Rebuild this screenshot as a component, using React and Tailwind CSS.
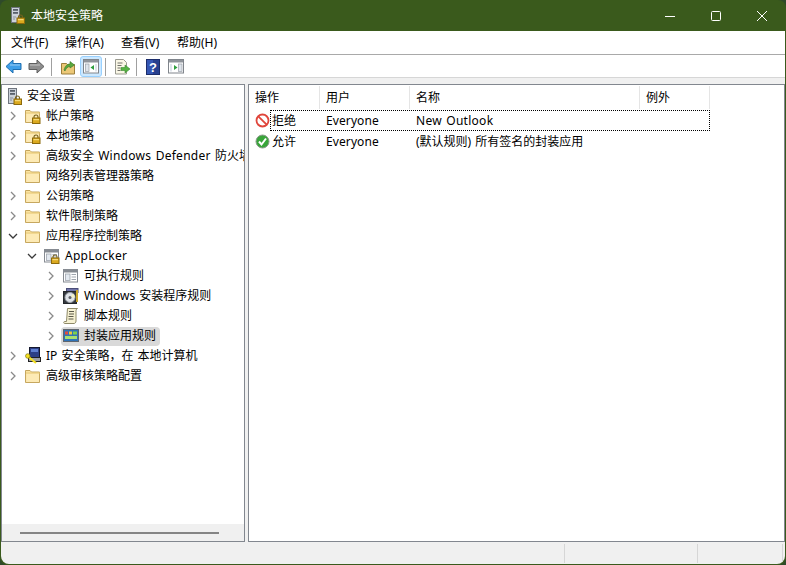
const FONT = "font-['Noto_Sans','Noto_Sans_CJK_SC',sans-serif]";

function Lock({ x = 8, y = 8 }) {
  return (
    <g transform={`translate(${x} ${y})`}>
      <path d="M2 4V2.500a2 2 0 0 1 4 0V4" fill="none" stroke="#77621f" strokeWidth="1.100" />
      <rect x="0.500" y="3.500" width="7.500" height="5.500" fill="#dba91e" stroke="#8c6a0c" />
      <rect x="1.500" y="4.500" width="5.500" height="1.200" fill="#f6d978" />
    </g>
  );
}

function Folder({ lock }) {
  return (
    <svg width="16" height="16" viewBox="0 0 16 16" className="shrink-0">
      <path d="M0.500 2.500h4.500l1.500 1.500h8v10.500H0.500z" fill="#fbe3a0" stroke="#c6a75f" />
      <rect x="1.500" y="5.500" width="12.500" height="8.500" fill="#fdeab5" />
      <path d="M1 5h14" stroke="#e6c878" />
      {lock && <Lock x={7} y={6.500} />}
    </svg>
  );
}

function Server() {
  return (
    <svg width="14" height="17" viewBox="0 0 14 17" className="shrink-0">
      <rect x="0.500" y="0.500" width="8" height="15" fill="#ccd2da" stroke="#6f757e" />
      <rect x="2" y="2" width="5" height="1.800" fill="#59606a" />
      <rect x="2" y="5" width="5" height="1.800" fill="#59606a" />
      <path d="M2 10h3M2 12h2" stroke="#8a9099" />
      <Lock x={5.500} y={7.500} />
    </svg>
  );
}

function WinIcon({ lock }) {
  return (
    <svg width="16" height="16" viewBox="0 0 16 16" className="shrink-0">
      <rect x="0.500" y="1.500" width="14" height="12.500" fill="#fff" stroke="#868b92" />
      <rect x="1" y="2" width="13" height="2.500" fill="#868b92" />
      <rect x="2.500" y="6" width="4.500" height="6.500" fill="#e3e9f0" stroke="#9fa5ad" strokeWidth="0.800" />
      <path d="M8.500 6.500h4.500M8.500 9h4.500M8.500 11.500h4.500" stroke="#9fa5ad" />
      {lock && <Lock x={7} y={6.500} />}
    </svg>
  );
}

function Disc() {
  return (
    <svg width="16" height="16" viewBox="0 0 16 16" className="shrink-0">
      <rect x="3.500" y="0.500" width="11.500" height="4" fill="#6f73a8" stroke="#4a4d78" />
      <rect x="0.500" y="3.500" width="13" height="12" fill="#34383e" stroke="#24272b" />
      <rect x="13" y="2" width="2" height="12" fill="#c9a62a" />
      <circle cx="7" cy="9.500" r="5" fill="#dfe3e8" stroke="#9ba0a8" />
      <path d="M7 9.500L10 5.500A5 5 0 0 1 12 9.500z" fill="#f3f1c8" />
      <circle cx="7" cy="9.500" r="1.500" fill="#5d6168" />
    </svg>
  );
}

function Script() {
  return (
    <svg width="16" height="16" viewBox="0 0 16 16" className="shrink-0">
      <path d="M4.500 0.500h10c-1.200.6-1.500 1.500-1.500 3V13c0 1.500-1 2.500-2 2.500H1.500c-1 0-1-2 0-2H3.500z" fill="#f6f1d2" stroke="#8f8a68" />
      <path d="M6 3.500h5M6 6h5M5.500 8.500h5M5.500 11h5" stroke="#5a5848" />
    </svg>
  );
}

function Pkg() {
  return (
    <svg width="16" height="14" viewBox="0 0 16 14" className="shrink-0">
      <rect x="0.500" y="0.500" width="15" height="12" fill="#2f73b8" stroke="#5f666e" />
      <rect x="2" y="2.500" width="3" height="3" fill="#e14b3f" />
      <rect x="6" y="2.500" width="3" height="3" fill="#f2c93a" />
      <rect x="10" y="2.500" width="4" height="3" fill="#7ed04c" />
      <rect x="2" y="7" width="12" height="3" fill="#a8e070" />
    </svg>
  );
}

function IpIcon() {
  return (
    <svg width="16" height="18" viewBox="0 0 16 18" className="shrink-0">
      <rect x="4.500" y="0.500" width="10" height="10" fill="#2c3f86" stroke="#14182e" />
      <rect x="6" y="2" width="7" height="3" fill="#5f7fd0" />
      <rect x="3.500" y="10.500" width="12" height="4" fill="#9ca1a8" stroke="#222" />
      <path d="M3 9.500l8 6.500" stroke="#f4e023" strokeWidth="2.200" />
      <circle cx="2.800" cy="9" r="2.300" fill="#f4e023" stroke="#6e640e" strokeWidth="0.600" />
    </svg>
  );
}

function Chevron({ open }) {
  return (
    <svg width="10" height="10" viewBox="0 0 10 10" className="shrink-0">
      {open ? (
        <path d="M1 3l4 4 4-4" fill="none" stroke="#3a3a3a" strokeWidth="1.300" />
      ) : (
        <path d="M3 1l4 4-4 4" fill="none" stroke="#8a8a8a" strokeWidth="1.300" />
      )}
    </svg>
  );
}

function L({ children }) {
  return <span className="tracking-[0.27px]">{children}</span>;
}

function TreeRow({ pad, chevron, icon, label, selected }) {
  return (
    <div className={`flex h-5 items-center whitespace-nowrap ${pad}`}>
      <span className="flex w-[12px] shrink-0 justify-center">{chevron && <Chevron open={chevron === "open"} />}</span>
      <span className={`ml-[4px] flex h-[19px] items-center rounded-sm pl-[2px] pr-[4px] ${selected ? "bg-[#d9d9d9]" : ""}`}>
        <span className="mr-[5px] flex w-[16px] shrink-0 justify-center">{icon}</span>
        <span>{label}</span>
      </span>
    </div>
  );
}

function Arrow({ left, color, dark }) {
  return (
    <svg width="17" height="15" viewBox="0 0 17 15" className="shrink-0">
      <path d={left ? "M1 7.500L8 1v3.500h8v6H8V14z" : "M16 7.500L9 1v3.500H1v6h8V14z"} fill={color} stroke={dark} />
      <path d={left ? "M5 6h10" : "M2 6h10"} stroke="#fff" strokeOpacity="0.500" />
    </svg>
  );
}

function Sep({ className }) {
  return <span className={`h-[18px] w-px shrink-0 bg-[#a0a0a0] ${className}`} />;
}

function PanelIcon({ side }) {
  return (
    <svg width="16" height="15" viewBox="0 0 16 15" className="shrink-0">
      <rect x="0.500" y="0.500" width="15" height="13.500" fill="#fff" stroke="#80858c" />
      <rect x="1" y="1" width="14" height="2.500" fill="#8f949b" />
      {side === "left" ? (
        <>
          <rect x="2.500" y="5" width="3.500" height="7.500" fill="#dfe5ec" stroke="#9aa0a8" strokeWidth="0.700" />
          <path d="M11 6v5L7.500 8.500z" fill="#2e9e3e" />
          <rect x="12" y="5" width="2" height="7.500" fill="#dfe5ec" />
        </>
      ) : (
        <>
          <rect x="2" y="5" width="2" height="7.500" fill="#dfe5ec" />
          <path d="M6 6v5l3.500-2.500z" fill="#2e9e3e" />
          <rect x="10.500" y="5" width="3.500" height="7.500" fill="#dfe5ec" stroke="#9aa0a8" strokeWidth="0.700" />
        </>
      )}
    </svg>
  );
}

function UpFolder() {
  return (
    <svg width="16" height="16" viewBox="0 0 16 16" className="shrink-0">
      <path d="M1.500 4.500h5l1 1h7v9.500h-13z" fill="#ecc877" stroke="#9c7f3c" />
      <path d="M4 11c1-4 3-6 6-6V2.500L14.500 6 10 9V7.500C8 7.500 6 9 5 12z" fill="#58a83c" stroke="#39752a" strokeWidth="0.600" />
    </svg>
  );
}

function ExportIcon() {
  return (
    <svg width="17" height="16" viewBox="0 0 17 16" className="shrink-0">
      <path d="M1.500 0.500h8l3 3v11.500h-11z" fill="#faf7e6" stroke="#9a9a90" />
      <path d="M3.500 4h5M3.500 6.500h4M3.500 9h3M3.500 11.500h3" stroke="#70706a" />
      <path d="M7 8.500h4V6l5 4-5 4v-2.500H7z" fill="#56b344" stroke="#3a8a30" strokeWidth="0.600" />
    </svg>
  );
}

function HelpIcon() {
  return (
    <svg width="14" height="16" viewBox="0 0 14 16" className="shrink-0">
      <rect x="0.500" y="0.500" width="13" height="15" fill="#27408f" stroke="#1c2d6b" />
      <rect x="1" y="1" width="6" height="14" fill="#3556b3" />
      <text x="7" y="12.500" textAnchor="middle" fontSize="13" fontWeight="700" fill="#fff" fontFamily="Liberation Sans, sans-serif">?</text>
    </svg>
  );
}

function Deny() {
  return (
    <svg width="15" height="15" viewBox="0 0 15 15" className="shrink-0">
      <circle cx="7.500" cy="7.500" r="6" fill="#fff" stroke="#e0463c" strokeWidth="1.800" />
      <path d="M3.300 3.300l8.400 8.400" stroke="#e0463c" strokeWidth="1.800" />
    </svg>
  );
}

function Allow() {
  return (
    <svg width="15" height="15" viewBox="0 0 15 15" className="shrink-0">
      <circle cx="7.500" cy="7.500" r="6.500" fill="#39a53a" stroke="#8a9a8a" />
      <path d="M4 7.500l2.500 3L11 4.500" fill="none" stroke="#fff" strokeWidth="2" />
    </svg>
  );
}

const tree = [
  { pad: "pl-[5px]", chevron: "right", icon: <Folder lock />, label: "帐户策略" },
  { pad: "pl-[5px]", chevron: "right", icon: <Folder lock />, label: "本地策略" },
  { pad: "pl-[5px]", chevron: "right", icon: <Folder />, label: <>高级安全 <L>Windows Defender</L> 防火墙</> },
  { pad: "pl-[5px]", icon: <Folder />, label: "网络列表管理器策略" },
  { pad: "pl-[5px]", chevron: "right", icon: <Folder />, label: "公钥策略" },
  { pad: "pl-[5px]", chevron: "right", icon: <Folder />, label: "软件限制策略" },
  { pad: "pl-[5px]", chevron: "open", icon: <Folder />, label: "应用程序控制策略" },
  { pad: "pl-[24px]", chevron: "open", icon: <WinIcon lock />, label: <L>AppLocker</L> },
  { pad: "pl-[43px]", chevron: "right", icon: <WinIcon />, label: "可执行规则" },
  { pad: "pl-[43px]", chevron: "right", icon: <Disc />, label: "Windows 安装程序规则" },
  { pad: "pl-[43px]", chevron: "right", icon: <Script />, label: "脚本规则" },
  { pad: "pl-[43px]", chevron: "right", icon: <Pkg />, label: "封装应用规则", selected: true },
  { pad: "pl-[5px]", chevron: "right", icon: <IpIcon />, label: "IP 安全策略，在 本地计算机" },
  { pad: "pl-[5px]", chevron: "right", icon: <Folder />, label: "高级审核策略配置" },
];

const rows = [
  { icon: <Deny />, action: "拒绝", user: "Everyone", name: <L>New Outlook</L>, focus: true },
  { icon: <Allow />, action: "允许", user: "Everyone", name: "(默认规则) 所有签名的封装应用" },
];

export default function App() {
  return (
    <div className={`${FONT} h-[565px] w-[786px] overflow-hidden bg-[#2f4a2a] text-[12px] text-black`}>
      <div className="flex h-full flex-col overflow-hidden rounded-lg bg-[#3a5a1c] px-px pb-px">
        <header className="flex h-[31px] shrink-0 items-center text-white">
          <span className="ml-[10px] flex"><Server /></span>
          <span className="ml-[6px]">本地安全策略</span>
          <div className="ml-auto flex h-full">
            {[
              <path key="a" d="M0 5.500h10" stroke="#fff" />,
              <rect key="b" x="0.500" y="0.500" width="9" height="9" rx="1" fill="none" stroke="#fff" />,
              <path key="c" d="M0 0l10 10M10 0L0 10" stroke="#fff" />,
            ].map((g, i) => (
              <span key={i} className="flex h-full w-[46px] items-center justify-center">
                <svg width="10" height="10" viewBox="0 0 10 10">{g}</svg>
              </span>
            ))}
          </div>
        </header>

        <div className="flex min-h-0 flex-1 flex-col overflow-hidden rounded-b-lg bg-[#f0f0f0]">
          <nav className="flex h-[24px] shrink-0 items-center border-b border-[#a9a9a9] bg-white pl-[10px] pt-px">
            <span className="w-[54px]">文件(F)</span>
            <span className="w-[56px]">操作(A)</span>
            <span className="w-[56px]">查看(V)</span>
            <span>帮助(H)</span>
          </nav>

          <div className="flex h-[23px] shrink-0 items-center border-b border-[#d6d6d6] bg-white pl-[4px] pt-px">
            <Arrow left color="#3f9fe8" dark="#1f6fb0" />
            <span className="ml-[6px] flex"><Arrow color="#8d8d8d" dark="#5e5e5e" /></span>
            <Sep className="ml-[6px]" />
            <span className="ml-[8px] flex"><UpFolder /></span>
            <span className="ml-[4px] flex h-[21px] w-[22px] items-center justify-center rounded-[3px] border border-[#99d1ff] bg-[#cce8ff]"><PanelIcon side="left" /></span>
            <Sep className="ml-[3px]" />
            <span className="ml-[8px] flex"><ExportIcon /></span>
            <Sep className="ml-[5px]" />
            <span className="ml-[9px] flex"><HelpIcon /></span>
            <span className="ml-[8px] flex"><PanelIcon side="right" /></span>
          </div>

          <main className="mt-[6px] flex min-h-0 flex-1 gap-[3px]">
            <section className="flex w-[244px] shrink-0 flex-col border border-[#82878f] bg-white">
              <div className="flex-1 overflow-hidden pt-[1px] [word-spacing:1px]">
                <div className="flex h-5 items-center pl-[6px]">
                  <Server />
                  <span className="ml-[5px]">安全设置</span>
                </div>
                {tree.map((r, i) => (
                  <TreeRow key={i} {...r} />
                ))}
              </div>
              <div className="flex h-[17px] shrink-0 items-center bg-[#f0f0f0] pl-[18px]">
                <span className="h-[2px] w-[199px] bg-[#858585]" />
              </div>
            </section>

            <section className="min-w-0 flex-1 border border-[#82878f] bg-white">
              <div className="flex h-[24px] items-stretch pt-px">
                {[
                  ["操作", "w-[71px] pl-[6px]"],
                  ["用户", "w-[90px] pl-[6px]"],
                  ["名称", "w-[230px] pl-[6px]"],
                  ["例外", "w-[70px] pl-[6px]"],
                ].map(([t, c]) => (
                  <div key={t} className={`flex items-center border-r border-[#e5e5e5] pt-px ${c}`}>{t}</div>
                ))}
              </div>
              <div className="mt-px [word-spacing:1px]">
                {rows.map((r) => (
                  <div key={r.action} className="flex h-[21px] w-[461px] items-center">
                    <span className="ml-[6px] flex w-[15px] shrink-0">{r.icon}</span>
                    <div className={`flex h-full w-[440px] items-center ${r.focus ? "border border-dotted border-black" : "border border-transparent"}`}>
                      <span className="ml-[1px] w-[54px] shrink-0">{r.action}</span>
                      <span className="w-[90px] shrink-0 tracking-[0.1px]">{r.user}</span>
                      <span className="whitespace-nowrap">{r.name}</span>
                    </div>
                  </div>
                ))}
              </div>
            </section>
          </main>

          <footer className="flex h-[22px] shrink-0 items-center justify-end pr-[2px]">
            <span className="h-[19px] w-[133px] border-l border-[#d6d6d6]" />
            <span className="h-[19px] w-[86px] border-x border-[#d6d6d6]" />
          </footer>
        </div>
      </div>
    </div>
  );
}
